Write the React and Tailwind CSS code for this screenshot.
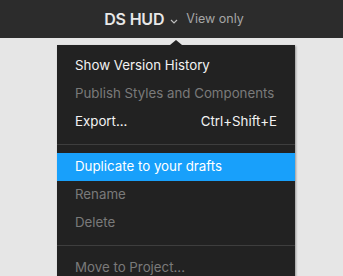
import React from "react";

const items = [
  [
    { label: "Show Version History" },
    { label: "Publish Styles and Components", disabled: true },
    { label: "Export...", shortcut: "Ctrl+Shift+E" },
  ],
  [
    { label: "Duplicate to your drafts", active: true },
    { label: "Rename", disabled: true },
    { label: "Delete", disabled: true },
  ],
  [{ label: "Move to Project...", disabled: true }],
];

function MenuRow({ item }) {
  const color = item.active
    ? "bg-[#18a0fb] text-white"
    : item.disabled
    ? "text-[#7a7a7a]"
    : "text-[#f2f2f2]";
  return (
    <div className={`flex h-[28px] items-center justify-between px-[18px] ${color}`}>
      <span>{item.label}</span>
      {item.shortcut && <span>{item.shortcut}</span>}
    </div>
  );
}

export default function App() {
  return (
    <div
      className="flex h-[276px] w-[343px] flex-col overflow-hidden bg-[#e6e6e6] text-[13.3px]"
      style={{ fontFamily: "Inter, 'Liberation Sans', sans-serif" }}
    >
      {/* top bar */}
      <div className="flex h-[38px] shrink-0 items-center justify-center bg-[#2c2c2c] pl-[5px]">
        <span className="text-[16px] font-semibold tracking-[-0.2px] text-[#e8e8e8]">DS HUD</span>
        <svg className="ml-[6px] mt-[5px]" width="8" height="5" viewBox="0 0 8 5" fill="none">
          <path d="M1 1l3 3 3-3" stroke="#bdbdbd" strokeWidth="1.2" />
        </svg>
        <span className="ml-[8px] text-[12.5px] text-[#a6a6a6]">View only</span>
      </div>

      {/* dropdown */}
      <div className="relative ml-[57px] mt-[7px] w-[238px] flex-1 bg-[#222222] pt-[7px] shadow-[1px_1px_2px_rgba(0,0,0,0.35)]">
        <div className="absolute left-[113px] top-[-5px] h-0 w-0 border-x-[6px] border-b-[5px] border-x-transparent border-b-[#222222]" />
        {items.map((group, gi) => (
          <div key={gi}>
            {gi > 0 && <div className="my-[8px] h-px bg-[#3e3e3e]" />}
            {group.map((item) => (
              <MenuRow key={item.label} item={item} />
            ))}
          </div>
        ))}
      </div>
    </div>
  );
}
